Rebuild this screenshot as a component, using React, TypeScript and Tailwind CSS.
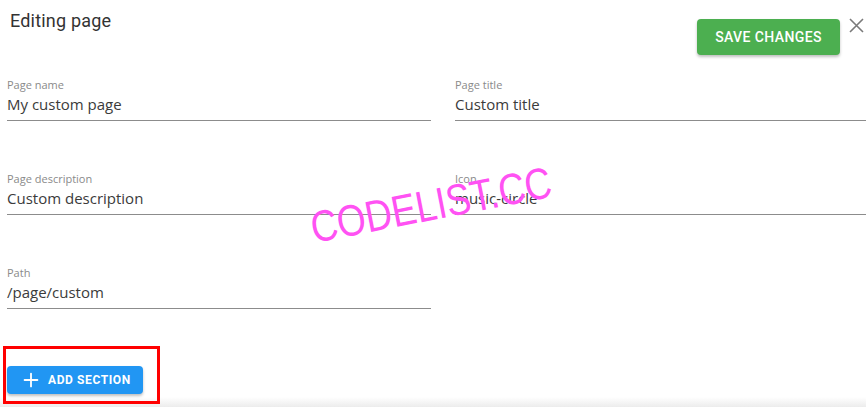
import { Plus } from "lucide-react";

const fields = [
  { label: "Page name", value: "My custom page" },
  { label: "Page title", value: "Custom title" },
  { label: "Page description", value: "Custom description" },
  { label: "Icon", value: "music-circle" },
  { label: "Path", value: "/page/custom" },
];

function Field({ label, value }: { label: string; value: string }) {
  return (
    <div className="flex flex-col border-b border-[#8c8c8c]">
      <span className="text-[11px] leading-[14px] text-[#8a8a8a]">{label}</span>
      <span className="mt-[2px] pb-[6px] text-[15px] leading-[20px] text-[#3b3b3b]">
        {value}
      </span>
    </div>
  );
}

export default function App() {
  return (
    <div className="relative h-[410px] w-[866px] overflow-hidden bg-white font-['Open_Sans',sans-serif]">
      {/* header */}
      <div className="flex h-[78px] items-start justify-between">
        <h1 className="pl-[10px] pt-[9px] font-['Roboto',sans-serif] text-[18px] leading-[24px] tracking-[0.2px] text-[#333]">
          Editing page
        </h1>
        <div className="flex items-start gap-[9px] pr-[2px]">
          <button className="mt-[19px] h-[36px] w-[143px] rounded-[4px] bg-[#4caf50] font-['Roboto',sans-serif] text-[14px] font-medium tracking-[0.4px] text-white shadow-[0_2px_3px_rgba(0,0,0,0.25)]">
            SAVE CHANGES
          </button>
          <svg
            className="mt-[18px]"
            width="15"
            height="15"
            viewBox="0 0 15 15"
            fill="none"
            stroke="#7a7a7a"
            strokeWidth="1.6"
          >
            <path d="M1 1 L14 14 M14 1 L1 14" />
          </svg>
        </div>
      </div>

      {/* form */}
      <div className="grid grid-cols-[424px_1fr] gap-x-[24px] gap-y-[51px] pl-[7px]">
        {fields.map((f) => (
          <Field key={f.label} label={f.label} value={f.value} />
        ))}
      </div>

      {/* bottom shade */}
      <div className="pointer-events-none absolute bottom-[3px] left-0 h-[10px] w-full bg-gradient-to-b from-white to-[#ececec]" />

      {/* add section */}
      <div className="relative z-10 ml-[3px] mt-[37px] h-[58px] w-[157px] border-[3px] border-[#ff0000] pl-[1px] pt-[17px]">
        <button className="flex h-[28px] w-[136px] items-center gap-[6px] rounded-[4px] bg-[#2196f3] pl-[13px] font-['Roboto',sans-serif] text-[12px] font-bold tracking-[0.6px] text-white shadow-[0_2px_3px_rgba(0,0,0,0.25)]">
          <Plus size={22} strokeWidth={2} />
          ADD SECTION
        </button>
      </div>

      {/* watermark */}
      <span className="pointer-events-none absolute left-[431px] top-[205px] -translate-x-1/2 -translate-y-1/2 -rotate-[11deg] scale-x-[0.84] whitespace-nowrap font-['Liberation_Sans',sans-serif] text-[44px] leading-none text-[#ff52f3]">
        CODELIST.CC
      </span>
    </div>
  );
}
